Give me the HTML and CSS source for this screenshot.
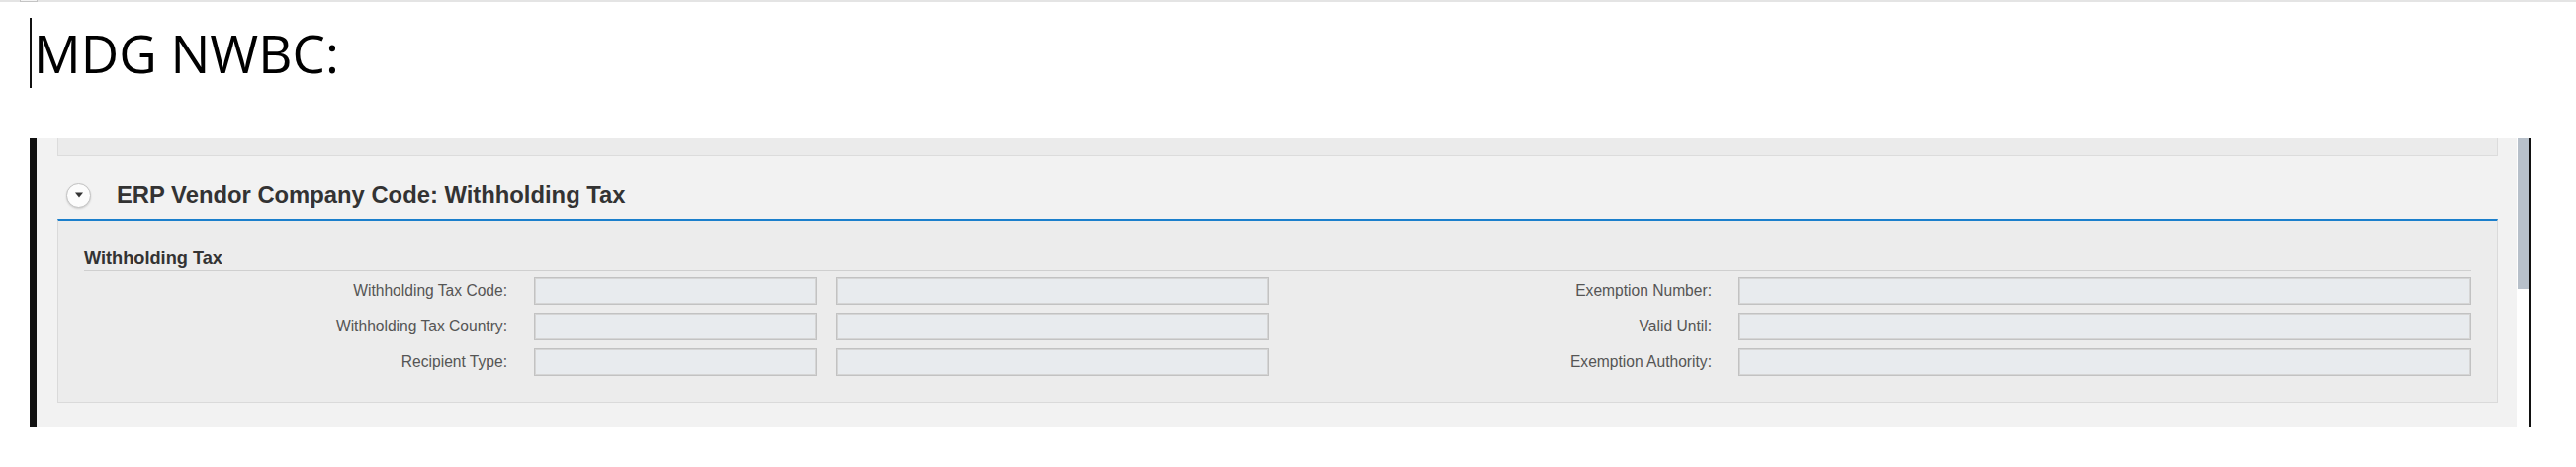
FILE: index.html
```html
<!DOCTYPE html>
<html lang="en">
<head>
<meta charset="utf-8">
<title>MDG NWBC</title>
<link rel="stylesheet" href="styles.css">
</head>
<body>
<div class="topbar"><span class="topbar-mark"></span></div>
<h1 class="doc-title"><span class="caret"></span>MDG NWBC:</h1>
<div class="frame">
  <div class="frame-edge"></div>
  <div class="panel">
    <div class="prev-group"></div>
    <div class="group-header">
      <span class="toggle">
        <svg width="10" height="6" viewBox="0 0 10 6"><path d="M1 0.5 L9 0.5 L5 5.5 Z" fill="#333"/></svg>
      </span>
      <h2 class="group-title">ERP Vendor Company Code: Withholding Tax</h2>
    </div>
    <div class="group-body">
      <h3 class="subhead">Withholding Tax</h3>
      <div class="form-grid">
        <span class="lbl">Withholding Tax Code:</span><div class="field"></div><div class="field field-gap"></div><span class="lbl">Exemption Number:</span><div class="field"></div>
        <span class="lbl">Withholding Tax Country:</span><div class="field"></div><div class="field field-gap"></div><span class="lbl">Valid Until:</span><div class="field"></div>
        <span class="lbl">Recipient Type:</span><div class="field"></div><div class="field field-gap"></div><span class="lbl">Exemption Authority:</span><div class="field"></div>
      </div>
    </div>
  </div>
  <div class="scrollbar"><div class="thumb"></div></div>
  <div class="frame-line"></div>
</div>
</body>
</html>
```
FILE: styles.css
```css
html, body {
  margin: 0;
  padding: 0;
  background: #ffffff;
}

.topbar {
  height: 2px;
  background: #e4e4e4;
  position: relative;
}

.topbar-mark {
  position: absolute;
  left: 20px;
  top: 0;
  width: 16px;
  height: 1px;
  border: 1px solid #c4c4c4;
  border-top: none;
  background: #f4f4f4;
}

.doc-title {
  margin: 0;
  padding: 16px 0 0 30px;
  font-family: "Open Sans", "Liberation Sans", sans-serif;
  font-weight: 400;
  font-size: 53px;
  line-height: 71px;
  color: #000;
}

.caret {
  display: inline-block;
  width: 2px;
  height: 71px;
  background: #111;
  vertical-align: top;
  margin-right: 2px;
}

.frame {
  display: flex;
  margin: 50px 0 0 30px;
  width: 2529px;
  height: 293px;
}

.frame-edge {
  width: 7px;
  background: #111;
}

.frame-line {
  width: 2px;
  background: #111;
}

.panel {
  flex: 1;
  background: #f2f2f2;
  padding: 0 19px 0 21px;
  font-family: "Liberation Sans", Arial, sans-serif;
}

.prev-group {
  height: 18px;
  background: #ebebeb;
  border: 1px solid #dcdcdc;
  border-top: none;
}

.group-header {
  display: flex;
  align-items: center;
  height: 48px;
  padding-top: 15px;
  padding-left: 9px;
}

.toggle {
  width: 25px;
  height: 25px;
  box-sizing: border-box;
  border-radius: 50%;
  background: #fcfcfc;
  border: 1px solid #c2c2c2;
  box-shadow: 0 1px 2px rgba(0, 0, 0, 0.15);
  display: flex;
  align-items: center;
  justify-content: center;
}

.group-title {
  margin: 0 0 0 26px;
  font-size: 23.8px;
  font-weight: 700;
  line-height: 28px;
  color: #333;
}

.group-body {
  background: #ececec;
  border: 1px solid #dadada;
  border-top: 2px solid #1b7fcc;
  padding: 27px 26px 26px 26px;
}

.subhead {
  margin: 0;
  font-size: 18.2px;
  font-weight: 700;
  line-height: 22px;
  color: #333;
  padding-bottom: 1px;
  border-bottom: 1px solid #cfcfcf;
}

.form-grid {
  margin-top: 6px;
  display: grid;
  grid-template-columns: 455px 286px 457px 1fr 741px;
  grid-auto-rows: 28px;
  row-gap: 8px;
  align-items: center;
}

.lbl {
  text-align: right;
  padding-right: 27px;
  font-size: 15.6px;
  color: #555;
  white-space: nowrap;
}

.field {
  height: 28px;
  box-sizing: border-box;
  background: #e8ebee;
  border: 1px solid #c2c2c2;
  box-shadow: inset 0 0 0 1px #d5d5d5;
}

.field-gap {
  margin-left: 19px;
}

.scrollbar {
  width: 12px;
  background: #ffffff;
}

.thumb {
  width: 11px;
  height: 153px;
  margin-left: 1px;
  background: #b7c0ca;
}
```
